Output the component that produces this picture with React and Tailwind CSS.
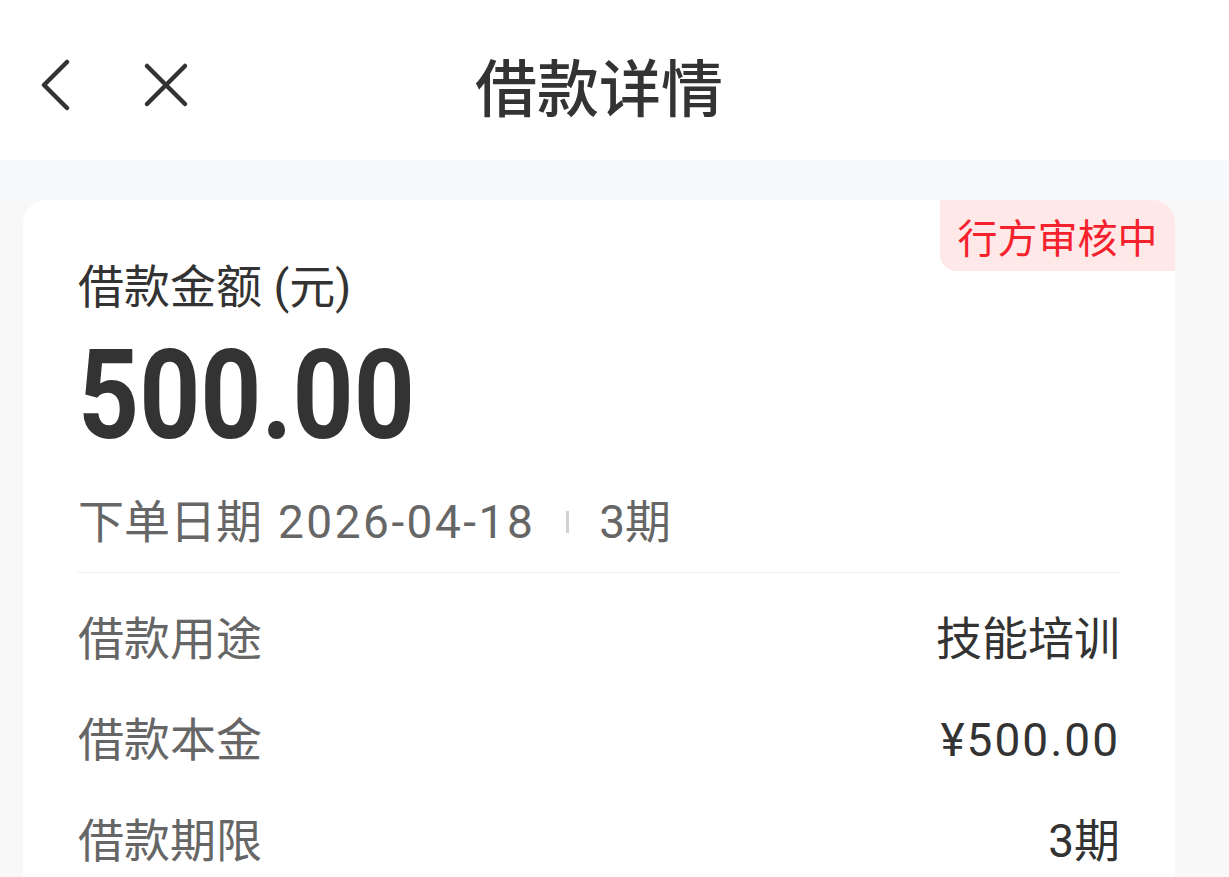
const rows = [
  { label: '借款用途', value: '技能培训' },
  { label: '借款本金', value: '¥500.00', latin: true },
  { label: '借款期限', value: '3期' },
];

const BackIcon = () => (
  <svg width="32" height="52" viewBox="0 0 32 52" fill="none">
    <path d="M27 3 L4 26 L27 49" stroke="#333" strokeWidth="4.5" strokeLinecap="round" strokeLinejoin="round" />
  </svg>
);

const CloseIcon = () => (
  <svg width="46" height="46" viewBox="0 0 46 46" fill="none">
    <path d="M4 4 L42 42 M42 4 L4 42" stroke="#333" strokeWidth="4.5" strokeLinecap="round" />
  </svg>
);

export default function App() {
  return (
    <div className="min-h-[877px] bg-[#f8f8f8] font-['Roboto','Noto_Sans_CJK_SC',sans-serif] text-[#333]">
      {/* Header */}
      <div className="flex h-[160px] items-center bg-white">
        <div className="mt-[10px] flex w-[200px] items-center pl-[40px]">
          <BackIcon />
          <div className="ml-[71px]">
            <CloseIcon />
          </div>
        </div>
        <h1 className="mt-[10px] flex-1 text-center font-['Noto_Sans_CJK_SC',sans-serif] text-[62px] font-medium leading-none text-[#333]">
          借款详情
        </h1>
        <div className="w-[231px]" />
      </div>

      <div className="h-[40px] bg-[#f8f9fd]" />

      {/* Card */}
      <div className="pl-[23px] pr-[54px]">
        <div className="relative rounded-t-[24px] bg-white px-[55px] pt-[57px] pb-[20px]">
          <div className="absolute top-0 right-0 flex h-[71px] w-[235px] items-center justify-center rounded-tr-[22px] rounded-bl-[16px] bg-[#fee8e8] font-['Noto_Sans_CJK_SC',sans-serif] text-[40px] text-[#f5222d]">
            行方审核中
          </div>

          <div className="flex h-[60px] items-center text-[46px] leading-[60px] text-[#333]">
            借款金额 (元)
          </div>

          <div className="mt-[14px] h-[130px] origin-left scale-x-[0.86] text-[124px] font-bold leading-[130px] text-[#333]">
            500.00
          </div>

          <div className="mt-[31px] flex h-[60px] items-center text-[46px] leading-[60px] text-[#666]">
            <span>下单日期</span>
            <span className="ml-[16px] tracking-[2.5px]">2026-04-18</span>
            <span className="mr-[30px] ml-[31px] h-[22px] w-[3px] bg-[#d0d0d0]" />
            <span>3期</span>
          </div>

          <div className="mt-[20px] border-t border-[#eeeeee]" />

          <div className="pt-[15px]">
            {rows.map((r) => (
              <div key={r.label} className="flex h-[101px] items-center justify-between text-[46px] leading-[60px]">
                <span className="text-[#666]">{r.label}</span>
                <span className={r.latin ? 'tracking-[2px] text-[#333]' : 'text-[#333]'}>{r.value}</span>
              </div>
            ))}
          </div>
        </div>
      </div>
    </div>
  );
}
